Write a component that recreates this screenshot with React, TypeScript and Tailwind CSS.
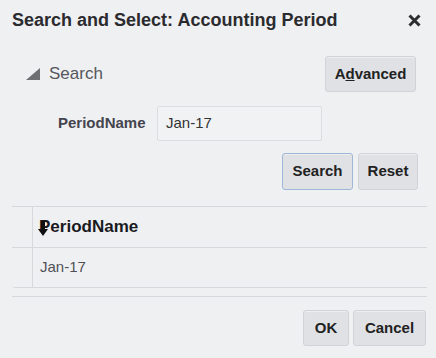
export default function App() {
  const btn =
    "flex items-center justify-center rounded-[3px] border bg-[#dfe1e5] text-[15px] font-bold text-[#222] shadow-[inset_0_1px_0_#eceef0]";

  return (
    <div className="flex h-[358px] w-[436px] flex-col overflow-hidden bg-[#eff0f2] font-['Liberation_Sans',Arial,sans-serif]">
      {/* title bar */}
      <div className="flex h-[40px] items-center justify-between pl-[12px] pr-[15px]">
        <h1 className="text-[18px] font-bold text-[#2b2b2f]">
          Search and Select: Accounting Period
        </h1>
        <svg width="13" height="13" viewBox="0 0 13 13">
          <path d="M1.5 1.5 L11.5 11.5 M11.5 1.5 L1.5 11.5" stroke="#2e2e30" strokeWidth="3" />
        </svg>
      </div>

      {/* search header */}
      <div className="mt-[16px] flex h-[36px] items-center justify-between pl-[26px] pr-[20px]">
        <div className="flex items-center gap-[9px]">
          <svg width="14" height="12" viewBox="0 0 14 12">
            <polygon points="14,0 14,12 0,12" fill="#6e6f73" />
          </svg>
          <span className="text-[17px] text-[#55575c]">Search</span>
        </div>
        <button className={`${btn} h-[36px] w-[91px] border-[#d0d3d8]`}>
          A<span className="underline">d</span>vanced
        </button>
      </div>

      {/* field */}
      <div className="mt-[14px] flex h-[35px] items-center pl-[58px]">
        <span className="w-[99px] text-[15px] font-bold text-[#44444e]">PeriodName</span>
        <div className="flex h-[35px] w-[165px] items-center rounded-[2px] border border-[#dcdde0] bg-[#f1f2f4] pl-[8px] text-[15px] text-[#333]">
          Jan-17
        </div>
      </div>

      {/* actions */}
      <div className="mt-[12px] flex justify-end gap-[5px] pr-[18px]">
        <button className={`${btn} h-[37px] w-[71px] border-[#9fb6d6]`}>Search</button>
        <button className={`${btn} h-[37px] w-[60px] border-[#d0d3d8]`}>Reset</button>
      </div>

      {/* results table */}
      <div className="ml-[12px] mr-[9px] mt-[16px] rounded-bl-[3px] border-y border-[#d6d8db]">
        <div className="flex h-[41px] border-b border-[#d6d8db]">
          <div className="w-[21px] border-r border-[#d6d8db]" />
          <div className="relative flex items-center pl-[6px] text-[17px] font-bold text-[#1a1a1e]">
            PeriodName
            <svg
              className="absolute left-[5px] top-[14px]"
              width="10"
              height="16"
              viewBox="0 0 10 16"
            >
              <rect x="3" y="0" width="4" height="9" fill="#111" />
              <polygon points="0,8 10,8 5,15" fill="#111" />
            </svg>
          </div>
        </div>
        <div className="flex h-[39px]">
          <div className="w-[21px] border-r border-[#d6d8db]" />
          <div className="flex items-center pl-[7px] text-[15px] text-[#4f5156]">Jan-17</div>
        </div>
      </div>

      <div className="ml-[12px] mr-[9px] mt-[8px] border-t border-[#d6d8db]" />

      {/* footer */}
      <div className="mt-[13px] flex justify-end gap-[4px] pr-[10px]">
        <button className={`${btn} h-[36px] w-[46px] border-[#d0d3d8]`}>OK</button>
        <button className={`${btn} h-[36px] w-[73px] border-[#d0d3d8]`}>Cancel</button>
      </div>
    </div>
  );
}
